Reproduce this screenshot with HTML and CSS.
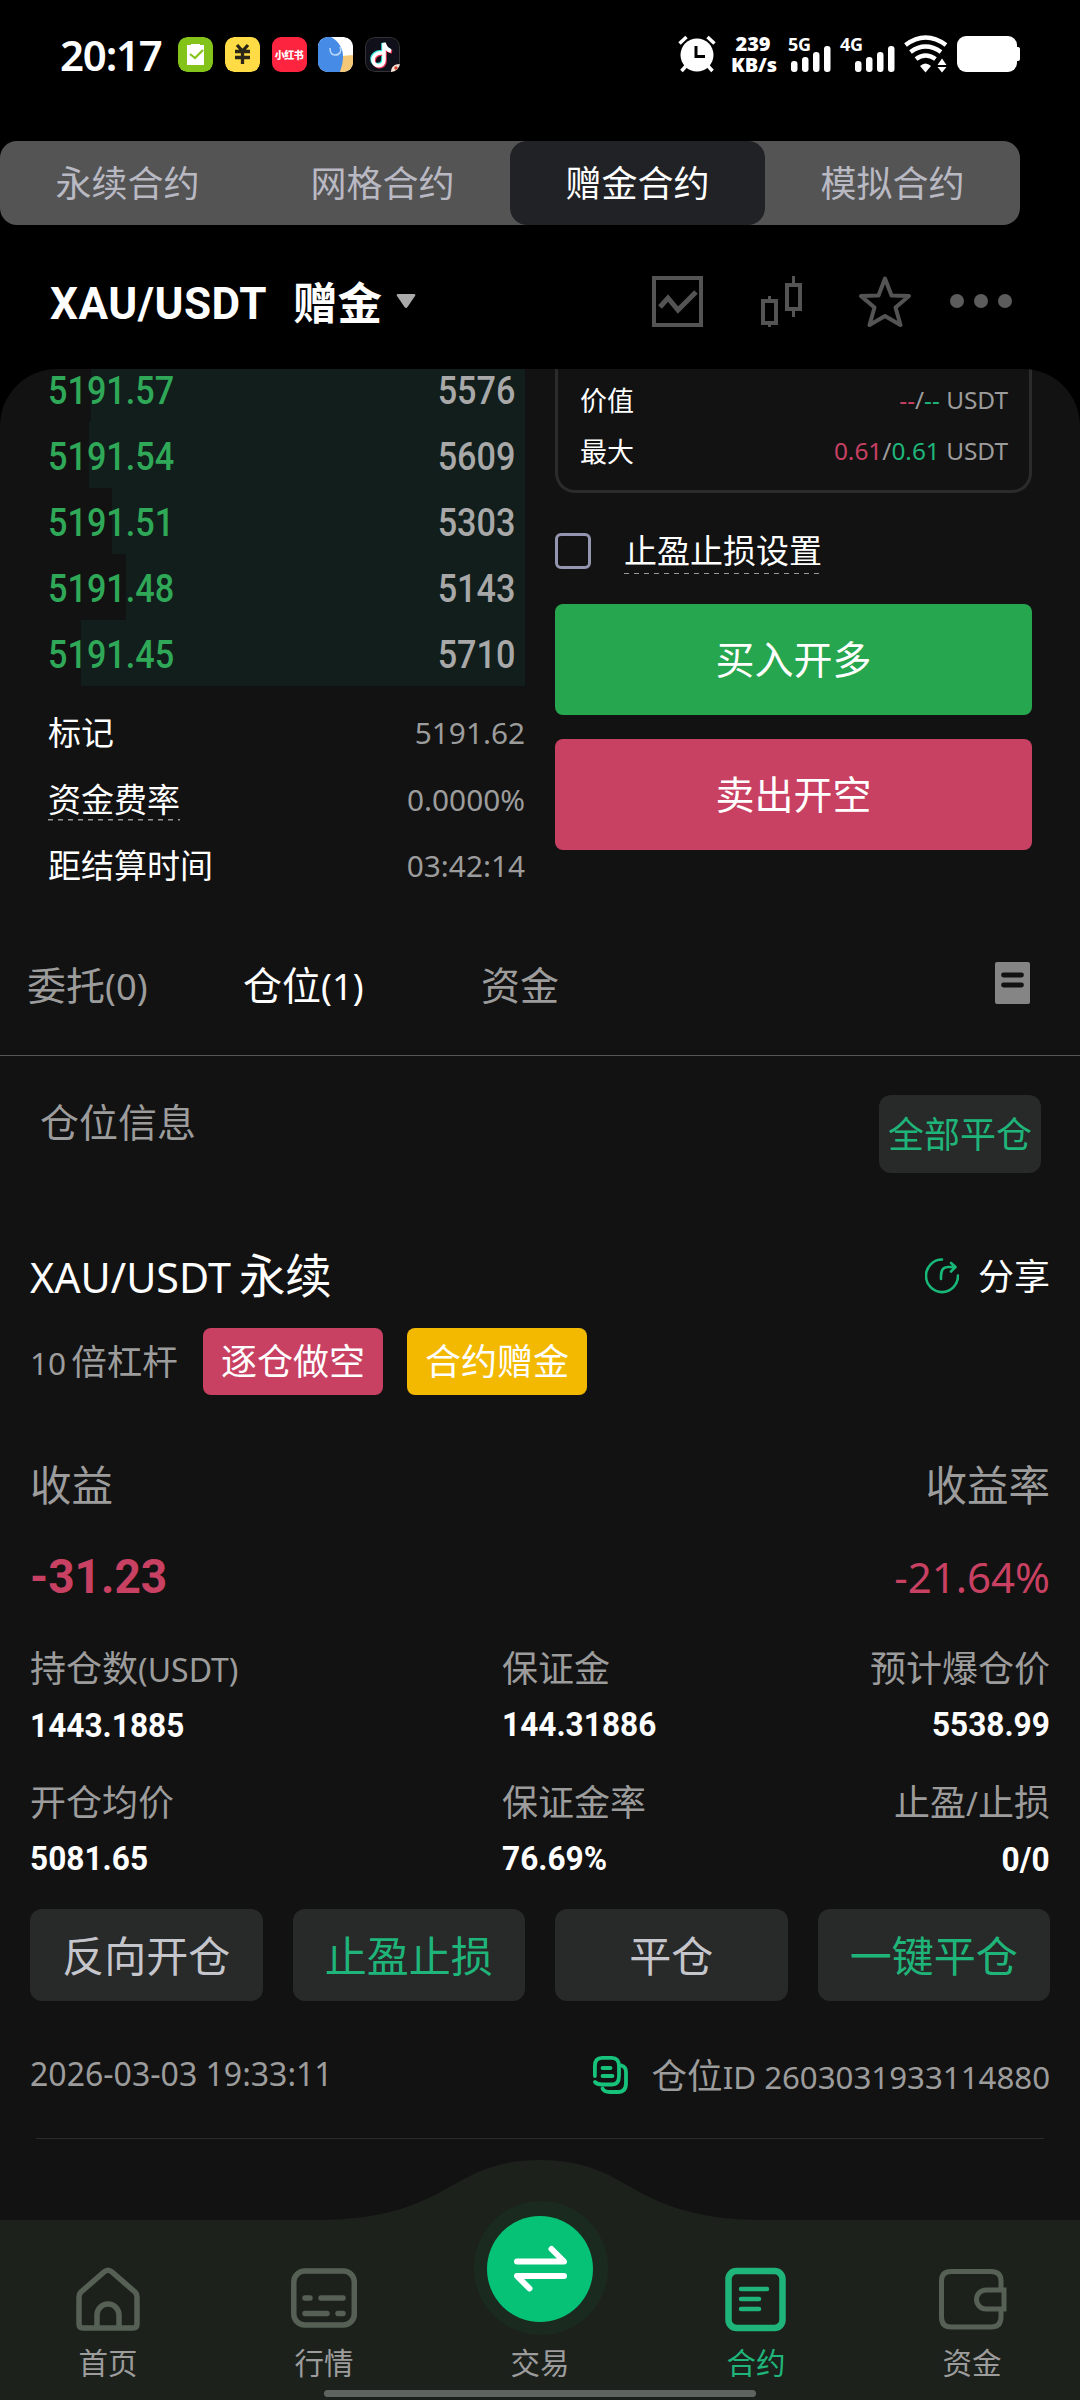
FILE: index.html
```html
<!DOCTYPE html>
<html lang="zh-CN">
<head>
<meta charset="utf-8">
<title>XAU/USDT 赠金合约</title>
<link rel="stylesheet" href="styles.css">
</head>
<body>
<header class="status">
  <span class="clock">20:17</span>
  <div class="apps">
    <svg class="app" viewBox="0 0 35 35"><rect width="35" height="35" rx="9" fill="#84c41a"/><path d="M9 8h4V7h9v1h4v20H9z" fill="#fff"/><path d="M12 17l5 4 8-8" fill="none" stroke="#84c41a" stroke-width="2.2"/></svg>
    <svg class="app" viewBox="0 0 35 35"><rect width="35" height="35" rx="9" fill="#ffdb45"/><path d="M12 8l5.500 6L23 8M10 14.500h15M10 20.500h15M17.500 14v13" fill="none" stroke="#2b2616" stroke-width="3.300"/></svg>
    <span class="app app-red">小红书</span>
    <svg class="app" viewBox="0 0 35 35"><defs><clipPath id="r"><rect width="35" height="35" rx="9"/></clipPath></defs><g clip-path="url(#r)"><rect width="35" height="35" fill="#fff"/><path d="M24 19l11-1v17H20z" fill="#f5c878"/><path d="M0 0h13c8 4 12 12 12 19 0 8-2 12-3 16H0z" fill="#468be6"/><path d="M12 11c0 4 1 7 5 7 5 0 7-4 5-8" fill="none" stroke="#b9d7ff" stroke-width="1.500"/></g></svg>
    <svg class="app" viewBox="0 0 35 35"><rect x=".5" y=".5" width="34" height="34" rx="9" fill="#10101a" stroke="#333"/><g fill="none" stroke-width="3.600"><path d="M17 15c-6-1-10 3-10 7 0 7 11 8 11 0V6c1 4 3 6 7 7" stroke="#35e5e5"/><path d="M19 17c-6-1-10 3-10 7 0 7 11 8 11 0V8c1 4 3 6 7 7" stroke="#f2365b"/><path d="M18 16c-6-1-10 3-10 7 0 7 11 8 11 0V6c1 4 3 7 7 8" stroke="#fff"/></g><path d="M26 35c0-5 3-8 9-8v3c0 3-2 5-5 5z" fill="#f7e3d5"/><circle cx="31" cy="31" r="1.700" fill="#d5412d"/></svg>
  </div>
  <div class="signals">
    <svg class="alarm" width="38" height="38" viewBox="0 0 38 38"><g fill="none" stroke="#fff" stroke-width="3.500"><path d="M1.500 8.500L8.500 2M36.500 8.500L29.500 2"/><path d="M8 31l-4.500 5M30 31l4.500 5"/></g><circle cx="19" cy="20" r="16.500" fill="#fff"/><path d="M18 11v10.500h9" fill="none" stroke="#000" stroke-width="3"/></svg>
    <span class="speed"><b>239</b><b>KB/s</b></span>
    <span class="cell"><b>5G</b><svg width="43" height="38" viewBox="0 0 43 38"><g fill="#fff"><rect x="3" y="26" width="6.500" height="11" rx="3"/><rect x="14" y="22" width="6.500" height="15" rx="3"/><rect x="25" y="17" width="6.500" height="20" rx="3"/><rect x="36" y="11" width="6.500" height="26" rx="3"/></g></svg></span>
    <span class="cell"><b>4G</b><svg width="55" height="38" viewBox="0 0 55 38"><g fill="#fff"><rect x="15" y="26" width="6.500" height="11" rx="3"/><rect x="26" y="22" width="6.500" height="15" rx="3"/><rect x="37" y="17" width="6.500" height="20" rx="3"/><rect x="48" y="11" width="6.500" height="26" rx="3"/></g></svg></span>
    <svg class="wifi" width="44" height="38" viewBox="0 0 44 38"><g fill="none" stroke="#fff" stroke-width="4.500"><path d="M1.500 10Q21.500-5 42 10"/><path d="M6.500 17Q21.500 6 37 17"/><path d="M12 24Q21.500 17 31.500 24"/></g><path d="M16 31q5.500-5 11 0l-5.500 6.500z" fill="#fff"/><path d="M33.500 30l4.500-6.500 4.500 6.500zM33.500 32h9L38 37.500z" fill="#fff"/></svg>
    <svg width="63" height="38" viewBox="0 0 63 38"><rect x="0" y="1" width="60" height="36" rx="9" fill="#fff"/><rect x="57" y="12" width="6" height="14" rx="2" fill="#fff"/></svg>
  </div>
</header>

<nav class="modes">
  <span>永续合约</span><span>网格合约</span><span class="on">赠金合约</span><span>模拟合约</span>
</nav>

<div class="pair">
  <div class="pair-name"><span class="sym">XAU/USDT</span><span class="gift">赠金</span>
    <svg class="caret" width="20" height="15" viewBox="0 0 20 15"><path d="M2 0h16q2 0 1 2l-7.500 11q-1.500 2-3 0L1 2Q0 0 2 0z" fill="#aaa"/></svg>
  </div>
  <div class="tools">
    <svg width="51" height="51" viewBox="0 0 51 51"><g fill="none" stroke="#545454"><rect x="2" y="2" width="47" height="47" stroke-width="4"/><path d="M8 31l8-9 10 12 18-18" stroke-width="5"/></g></svg>
    <svg width="42" height="51" viewBox="0 0 42 51"><g fill="none" stroke="#545454" stroke-width="4"><rect x="2" y="25" width="13" height="22"/><rect x="26" y="9" width="13" height="24"/><path d="M8.500 20v5M8.500 47v4M32.500 0v9M32.500 33v8" stroke-width="3"/></g></svg>
    <svg width="52" height="51" viewBox="0 0 52 51"><path d="M26 2.500L32.500 19.500 50 20 36.500 31.500 41.500 49 26 40 10.500 49 15.500 31.500 2 20 19.500 19.500z" fill="none" stroke="#545454" stroke-width="4" stroke-linejoin="round"/></svg>
    <svg width="62" height="14" viewBox="0 0 62 14"><g fill="#5c5c5c"><circle cx="7" cy="7" r="7"/><circle cx="31" cy="7" r="7"/><circle cx="55" cy="7" r="7"/></g></svg>
  </div>
</div>

<main class="panel">
  <section class="trade">
    <div class="left">
      <div class="book">
        <div class="lvl" style="--depth:434px"><span class="din bid">5191.57</span><span class="din r">5576</span></div>
        <div class="lvl" style="--depth:436px"><span class="din bid">5191.54</span><span class="din r">5609</span></div>
        <div class="lvl" style="--depth:413px"><span class="din bid">5191.51</span><span class="din r">5303</span></div>
        <div class="lvl" style="--depth:399px"><span class="din bid">5191.48</span><span class="din r">5143</span></div>
        <div class="lvl" style="--depth:444px"><span class="din bid">5191.45</span><span class="din r">5710</span></div>
      </div>
      <dl class="facts">
        <div><dt>标记</dt><dd>5191.62</dd></div>
        <div><dt class="dash">资金费率</dt><dd>0.0000%</dd></div>
        <div><dt>距结算时间</dt><dd>03:42:14</dd></div>
      </dl>
    </div>
    <div class="right">
      <div class="limits">
        <div><span>价值</span><span class="lat"><i class="red">--</i>/<i class="green">--</i> USDT</span></div>
        <div><span>最大</span><span class="lat"><i class="red">0.61</i>/<i class="green">0.61</i> USDT</span></div>
      </div>
      <div class="tpsl"><span class="box"></span><span class="dash">止盈止损设置</span></div>
      <div class="act buy">买入开多</div>
      <div class="act sell">卖出开空</div>
    </div>
  </section>

  <nav class="tabs">
    <span>委托<em>(0)</em></span><span class="on">仓位<em>(1)</em></span><span>资金</span>
    <svg width="35" height="42" viewBox="0 0 35 42"><rect width="35" height="42" rx="2" fill="#858585"/><path d="M8.500 13h18M8.500 23h18" stroke="#121212" stroke-width="4.800" stroke-linecap="round"/></svg>
  </nav>

  <div class="info"><h2>仓位信息</h2><span class="closeall">全部平仓</span></div>

  <section class="pos">
    <div class="name"><h3><span>XAU/USDT</span>永续</h3>
      <span class="share"><svg width="34" height="36" viewBox="0 0 34 36"><g fill="none" stroke="#18b879" stroke-width="2.600" stroke-linecap="round" stroke-linejoin="round"><path d="M17 1.500A16 16.300 0 1 0 33 17.500"/><path d="M16 21v-3q0-9 7-9h6M26 5l4.500 4-4.500 4.500"/></g></svg>分享</span></div>
    <div class="tags"><span class="lever"><em>10</em>倍杠杆</span><span class="tag short">逐仓做空</span><span class="tag gold">合约赠金</span></div>
    <div class="line pl"><span>收益</span><span>收益率</span></div>
    <div class="line plv"><span class="din">-31.23</span><span>-21.64%</span></div>
    <div class="stats">
      <div><label>持仓数<em>(USDT)</em></label><b class="din">1443.1885</b></div>
      <div><label>保证金</label><b class="din">144.31886</b></div>
      <div><label>预计爆仓价</label><b class="din r">5538.99</b></div>
      <div><label>开仓均价</label><b class="din">5081.65</b></div>
      <div><label>保证金率</label><b class="din">76.69%</b></div>
      <div><label>止盈<em>/</em>止损</label><b class="din r">0/0</b></div>
    </div>
    <div class="btns"><span>反向开仓</span><span class="green">止盈止损</span><span>平仓</span><span class="green">一键平仓</span></div>
    <div class="foot"><em>2026-03-03 19:33:11</em>
      <span class="pid"><svg width="35" height="38" viewBox="0 0 35 38"><g fill="none" stroke="#17c27b" stroke-width="3.800" stroke-linecap="round"><path d="M1.900 20V10Q1.900 1.900 9 1.900H19Q26 1.900 26 10V20Q26 28.500 19 28.500H9Q4 28.500 2 26"/><path d="M28.500 9.500Q33 11 33 16V27Q33 36 25 36H17Q11 36 9.500 32.500"/><path d="M9.500 12h8M9.500 20h10"/></g></svg><span>仓位<em>ID 2603031933114880</em></span></span></div>
  </section>
</main>

<footer class="dock">
  <svg class="dock-bg" width="1080" height="240" viewBox="0 0 1080 240"><path d="M0 60H315C390 60 422 43 462 20C487 6 510 0 540 0S593 6 618 20C658 43 690 60 765 60H1080V240H0z" fill="#1c211c"/><circle cx="541" cy="108" r="67" fill="#1b2a1e"/></svg>
  <div class="items">
    <a><svg width="66" height="66" viewBox="0 0 66 66"><g fill="none" stroke="#566054" stroke-width="5.500" stroke-linejoin="round"><path d="M29 6Q33 2.500 37 6L60 26Q62 28 62 31V58Q62 62 58 62H8Q4 62 4 58V31Q4 28 6 26z"/><path d="M22 62V49a11 11 0 0 1 22 0V62"/></g></svg>首页</a>
    <a><svg width="66" height="66" viewBox="0 0 66 66"><g fill="none" stroke="#566054" stroke-width="5.500" stroke-linecap="round"><rect x="2.800" y="5" width="60.500" height="54" rx="11"/><path d="M14 32h5M30 32h22M14 47.500h22M47 47.500h5"/></g></svg>行情</a>
    <a><span class="swap"><svg width="106" height="106" viewBox="0 0 106 106"><circle cx="53" cy="53" r="53" fill="#06c277"/><path d="M30 45.500H77L64.500 33M77 60H30L42.500 72.500" fill="none" stroke="#fff" stroke-width="6" stroke-linecap="round" stroke-linejoin="round"/></svg></span>交易</a>
    <a class="green"><svg width="66" height="66" viewBox="0 0 66 66"><g fill="none" stroke="#1fb57a" stroke-linecap="round"><rect x="5.500" y="5" width="54" height="57" rx="8" stroke-width="6.500"/><path d="M18 23h26M18 33h18M18 43h18" stroke-width="4.500"/></g></svg>合约</a>
    <a><svg width="70" height="66" viewBox="0 0 70 66"><g fill="none" stroke="#566054" stroke-width="5"><path d="M64 24V15Q64 5.500 54 5.500H14Q4.500 5.500 4.500 15V51Q4.500 61 14 61H54Q64 61 64 51V42"/><path d="M67 24H49a9.500 9.500 0 0 0 0 19H67z"/></g></svg>资金</a>
  </div>
  <div class="homebar"></div>
</footer>
</body>
</html>
```

FILE: styles.css
```css
* { box-sizing: border-box; margin: 0; padding: 0; }
body {
  width: 1080px; height: 2400px; overflow: hidden; position: relative;
  background: #000; color: #fff;
  font-family: "Noto Sans", "Noto Sans CJK SC", sans-serif;
  font-size: 36px; white-space: nowrap;
}
svg { display: block; flex: none; }
em, i { font-style: normal; }
em { font-size: .89em; }
.green { color: #1fb57a; }
.red { color: #c84062; }
.din { display: inline-block; font-family: Roboto, sans-serif; transform: scaleX(.93); transform-origin: left center; }
.din.r { transform-origin: right center; }

.status { display: flex; align-items: center; height: 141px; padding: 0 60px 33px; }
.clock { width: 118px; font: 600 42px "Noto Sans", sans-serif; letter-spacing: -1.2px; }
.apps { display: flex; gap: 11.8px; }
.app { width: 35px; height: 35px; border-radius: 9px; }
.app-red { background: #fd2440; font: 900 10px/35px "Noto Sans CJK SC", sans-serif; text-align: center; letter-spacing: -.5px; }
.signals { display: flex; align-items: center; margin-left: auto; }
.alarm { margin-right: 15px; }
.speed { display: flex; flex-direction: column; width: 44px; margin-right: 13px; text-align: center; font: 700 20px/21px "Noto Sans", sans-serif; letter-spacing: -.1px; }
.cell { display: grid; margin-right: 9px; }
.cell > * { grid-area: 1 / 1; }
.cell b { font: 700 18px/18px "Noto Sans", sans-serif; letter-spacing: -.3px; }
.wifi { margin-right: 9px; }

.modes { display: grid; grid-template-columns: repeat(4, 1fr); width: 1020px; height: 84px; border-radius: 17px; background: #545454; color: #b9b9c3; }
.modes span { display: grid; place-items: center; border-radius: 17px; padding-bottom: 4px; }
.modes .on { background: #212226; color: #fff; }

.pair { display: flex; justify-content: space-between; align-items: center; height: 144px; padding: 8px 68px 0 50px; }
.pair-name { display: flex; align-items: center; }
.sym { width: 243px; font: 700 44px Roboto, sans-serif; letter-spacing: .5px; padding-top: 5px; }
.gift { font-weight: 700; font-size: 44.5px; line-height: 60px; padding-top: 3px; }
.caret { margin-left: 14px; }
.tools { display: flex; align-items: center; }
.tools svg:nth-child(1) { margin-right: 58px; }
.tools svg:nth-child(2) { margin-right: 56px; }
.tools svg:nth-child(3) { margin-right: 39px; }

.panel { height: 2031px; border-radius: 57px 57px 0 0; background: #121212; overflow: hidden; }
.trade { display: grid; grid-template-columns: 525px 477px; column-gap: 30px; height: 529px; }
.book { margin-top: -13px; }
.lvl { display: flex; justify-content: space-between; align-items: center; height: 66px; padding: 4px 10px 0 48px; font-size: 38px; font-weight: 500; color: #a8a8a8; background: linear-gradient(#111e1c, #111e1c) right / var(--depth) 100% no-repeat; }
.lvl .din { transform: scaleX(.9); }
.bid { color: #2fa858; }
.facts { margin-top: 14px; padding-left: 48px; }
.facts div { display: flex; justify-content: space-between; align-items: center; height: 66.500px; }
.facts dt { font-size: 33px; line-height: 42px; }
.facts dd { font-size: 29.800px; color: #9c9c9c; padding-bottom: 1px; }
.dash { background: repeating-linear-gradient(90deg, #999 0 5px, transparent 5px 10px) left bottom / 100% 1.500px no-repeat; }
.limits { height: 124px; padding: 5px 21px 0 22px; border: 3px solid #2b2b2b; border-top: 0; border-radius: 0 0 20px 20px; }
.limits div { display: flex; justify-content: space-between; align-items: center; height: 51px; font-size: 27px; }
.limits .lat { font-size: 24.400px; color: #9c9c9c; }
.tpsl { display: flex; align-items: center; gap: 33px; height: 46px; margin: 35px 0 30px; }
.box { width: 36px; height: 36px; border: 3px solid #9495b0; border-radius: 6px; }
.tpsl .dash { font-size: 33px; line-height: 46px; }
.act { display: grid; place-items: center; height: 111px; margin-bottom: 24px; padding-bottom: 6px; border-radius: 8px; font-size: 39px; }
.buy { background: #26a64e; }
.sell { background: #c84062; }

.tabs { display: flex; align-items: center; height: 158px; padding: 12px 50px 0 27px; border-bottom: 1px solid #555; font-size: 39px; color: #9c9c9c; }
.tabs span:nth-child(1) { width: 216px; }
.tabs span:nth-child(2) { width: 238px; }
.tabs em { font-size: .93em; }
.tabs .on { color: #fff; }
.tabs svg { margin-left: auto; }

.info { display: flex; justify-content: space-between; height: 117px; padding: 39px 39px 0 40px; }
.info h2 { font-size: 39px; line-height: 54px; font-weight: 400; color: #9c9c9c; }
.closeall { display: grid; place-items: center; width: 162px; height: 78px; border-radius: 12px; background: #282929; color: #1fb57a; padding-bottom: 4px; }

.pos { margin: 63px 30px 0; }
.name { display: flex; justify-content: space-between; align-items: center; height: 80px; }
.name h3 { font-weight: 400; font-size: 46.500px; padding-bottom: 6px; }
.name h3 span { font-size: 41.300px; margin-right: 8px; }
.share { display: flex; align-items: center; gap: 19px; padding-bottom: 4px; }
.share svg { margin-top: 4px; }
.tags { display: flex; align-items: center; height: 67px; margin-top: 12px; }
.lever { width: 173px; color: #9c9c9c; font-size: 35.500px; padding-bottom: 4px; }
.lever em { margin-right: 5px; }
.tag { display: grid; place-items: center; width: 180px; height: 67px; margin-right: 24px; padding-bottom: 4px; border-radius: 8px; }
.short { background: #c84062; }
.gold { background: #f3b900; }
.line { display: flex; justify-content: space-between; align-items: center; }
.pl { height: 60px; margin-top: 58px; font-size: 41.500px; color: #9c9c9c; }
.plv { height: 60px; margin-top: 33px; font-size: 42px; color: #c84062; }
.plv .din { font-size: 48px; font-weight: 700; transform: scaleX(.96); }
.stats { display: grid; grid-template-columns: 472px 1fr auto; height: 267px; margin-top: 36px; grid-auto-rows: 134px; }
.stats div { display: flex; flex-direction: column; align-items: flex-start; }
.stats div:nth-child(3n) { align-items: flex-end; }
.stats label { color: #9c9c9c; line-height: 54px; }
.stats b { font-size: 34px; line-height: 56px; }
.btns { display: grid; grid-template-columns: repeat(4, 1fr); gap: 30px; height: 92px; color: #c5c5cc; font-size: 42px; }
.btns span { display: grid; place-items: center; padding-bottom: 4px; border-radius: 12px; background: #282929; }
.btns .green { color: #1fb57a; }
.foot { display: flex; justify-content: space-between; align-items: center; height: 137px; padding-top: 8px; color: #9c9c9c; }
.pid { display: flex; align-items: center; gap: 24px; font-size: 35.500px; }
.pid em { font-size: .88em; }
.pid svg { margin-top: 2px; }
.pos::after { content: ""; display: block; height: 1px; margin: 0 6px; background: #2a2a2a; }

.dock { position: absolute; left: 0; top: 2160px; width: 1080px; height: 240px; }
.dock-bg { position: absolute; left: 0; top: 0; }
.items { position: relative; display: grid; grid-template-columns: repeat(5, 216px); height: 240px; }
.items a { display: flex; flex-direction: column; align-items: center; justify-content: flex-end; gap: 10px; height: 224px; font-size: 29.500px; line-height: 42px; color: #9c9c9c; }
.items .green { color: #1fb57a; }
.swap { margin-bottom: 10px; }
.homebar { position: absolute; left: 324px; bottom: 3px; width: 432px; height: 7px; border-radius: 4px; background: #5e645f; }
```
